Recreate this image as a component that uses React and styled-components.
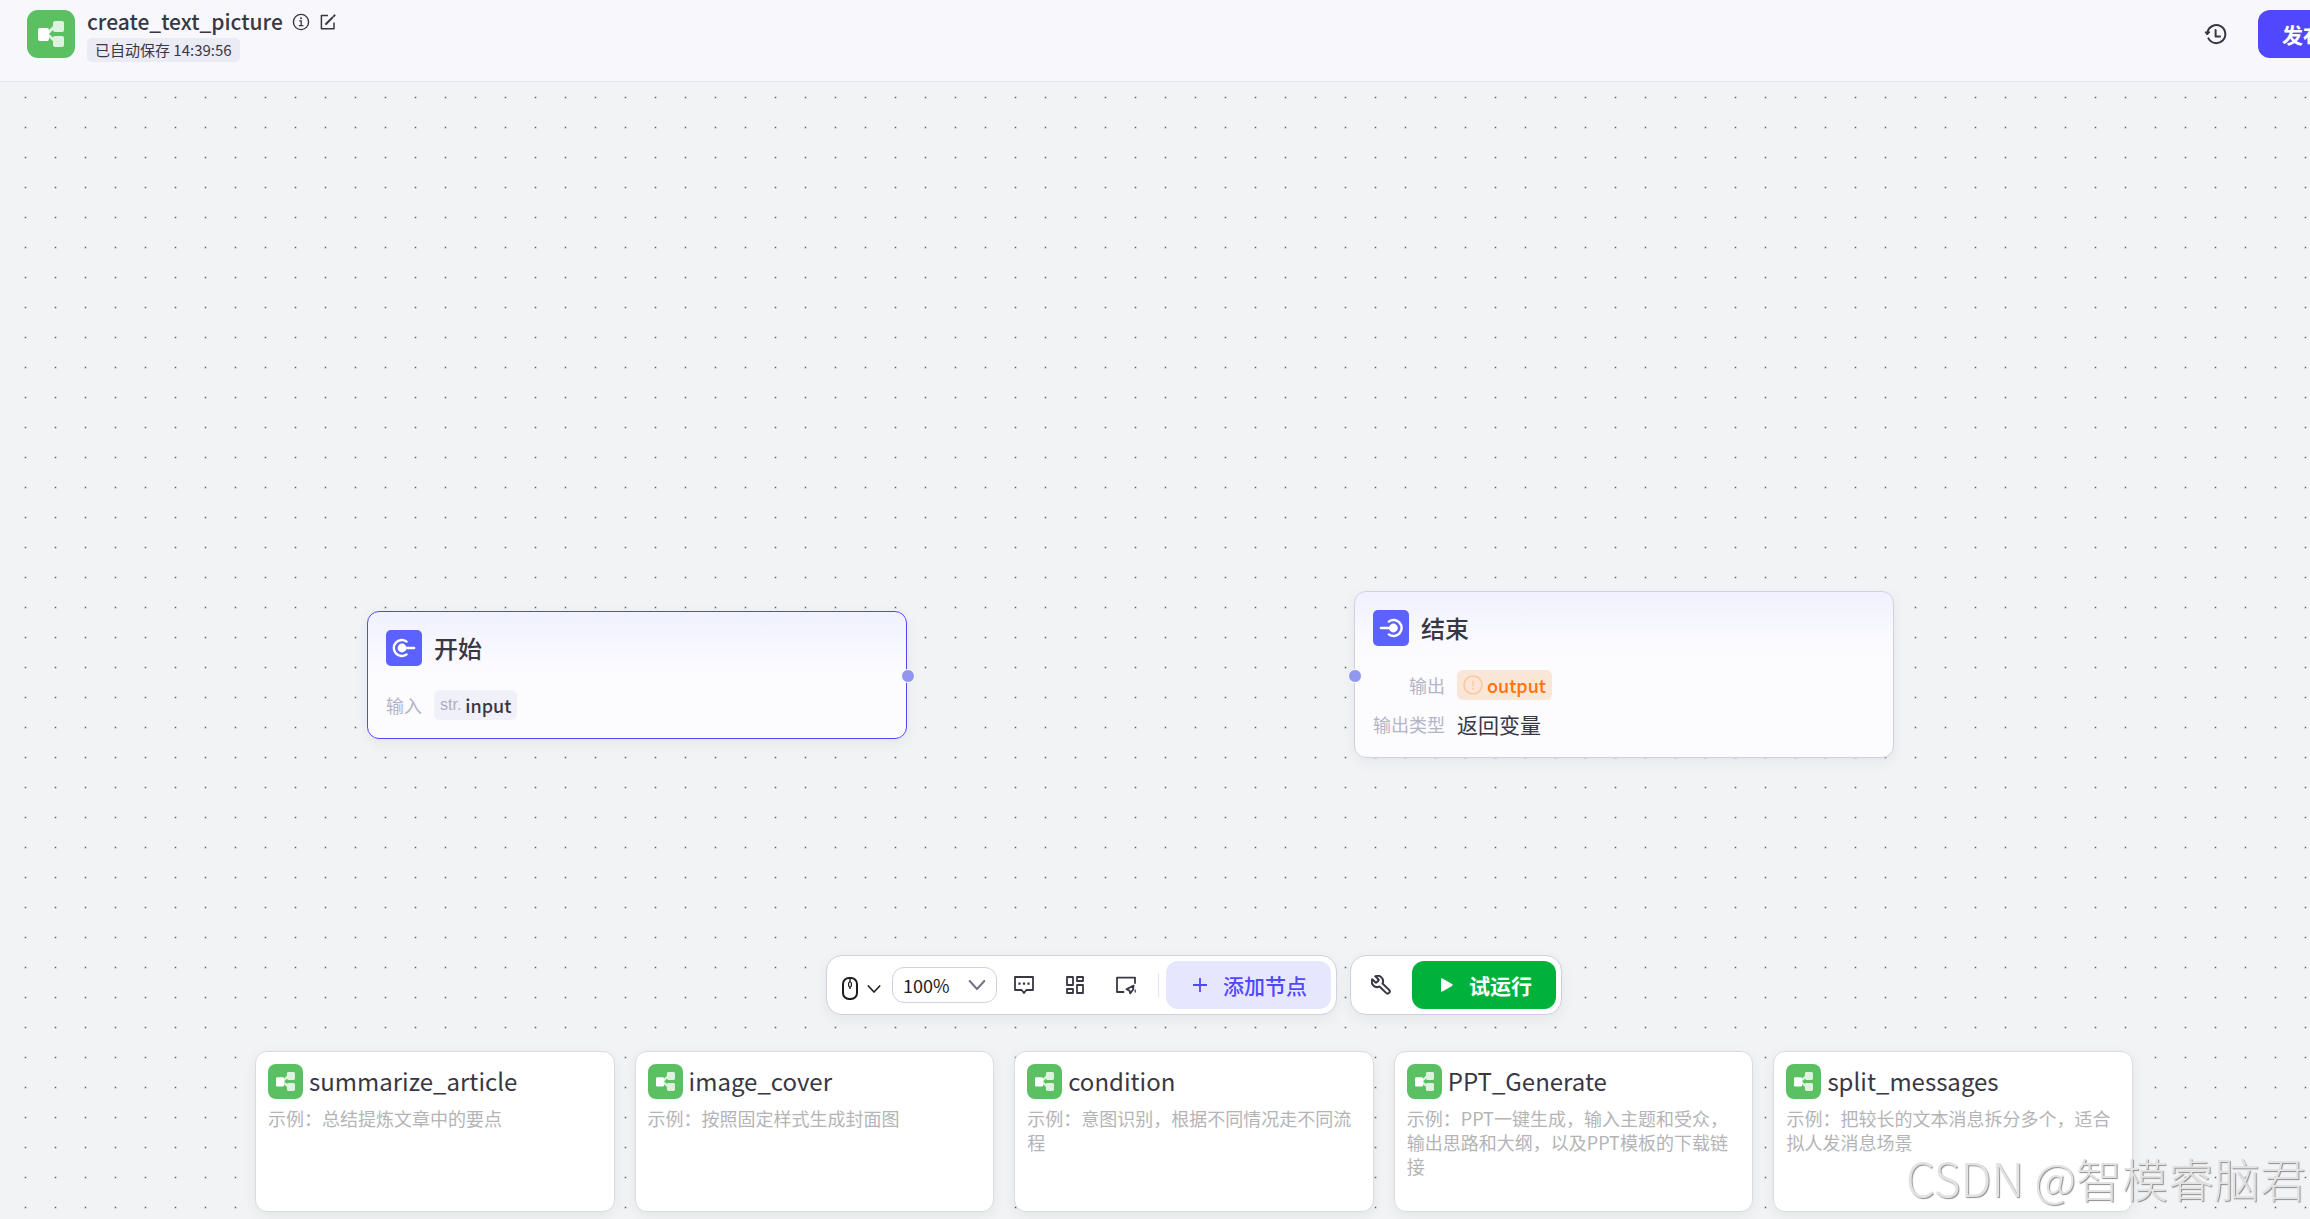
import React, { useState } from 'react';
import styled, { createGlobalStyle } from 'styled-components';

const EXAMPLES = [
  { name: 'summarize_article', text: '示例：总结提炼文章中的要点' },
  { name: 'image_cover', text: '示例：按照固定样式生成封面图' },
  { name: 'condition', text: '示例：意图识别，根据不同情况走不同流程' },
  {
    name: 'PPT_Generate',
    text: '示例：PPT一键生成，输入主题和受众，输出思路和大纲，以及PPT模板的下载链接',
  },
  {
    name: 'split_messages',
    text: '示例：把较长的文本消息拆分多个，适合拟人发消息场景',
  },
];

function WorkflowIcon() {
  return (
    <svg viewBox="0 0 48 48" aria-hidden="true">
      <path
        d="M20 24 L29 15 M20 24 L29 32"
        stroke="#def2df"
        strokeWidth="3"
        fill="none"
      />
      <rect x="26" y="11" width="11" height="11" rx="2" fill="#def2df" />
      <rect x="26" y="26" width="11" height="11" rx="2" fill="#def2df" />
      <rect x="11" y="18" width="11" height="13" rx="2" fill="#fff" />
    </svg>
  );
}

function StartIcon() {
  return (
    <svg viewBox="0 0 36 36" aria-hidden="true">
      <path
        d="M20.6 11.6A8 8 0 1 0 20.6 24.4"
        fill="none"
        stroke="#fff"
        strokeWidth="2.4"
        strokeLinecap="round"
      />
      <circle cx="16" cy="18" r="4.4" fill="#fff" />
      <path d="M16 18H28" stroke="#fff" strokeWidth="2.6" strokeLinecap="round" />
    </svg>
  );
}

function EndIcon() {
  return (
    <svg viewBox="0 0 36 36" aria-hidden="true">
      <path
        d="M15.8 11.6A8 8 0 1 1 15.8 24.4"
        fill="none"
        stroke="#fff"
        strokeWidth="2.4"
        strokeLinecap="round"
      />
      <circle cx="20.4" cy="18" r="4.4" fill="#fff" />
      <path d="M8 18H20" stroke="#fff" strokeWidth="2.6" strokeLinecap="round" />
    </svg>
  );
}

function InfoIcon() {
  return (
    <svg width="18" height="18" viewBox="0 0 18 18" fill="none" stroke="currentColor">
      <circle cx="9" cy="9" r="7.6" strokeWidth="1.4" />
      <path d="M7.2 7.8H9.2V12.6M6.8 12.6H11.4" strokeWidth="1.3" />
      <circle cx="9" cy="5.2" r="1" fill="currentColor" stroke="none" />
    </svg>
  );
}

function EditIcon() {
  return (
    <svg width="18" height="18" viewBox="0 0 18 18" fill="none" stroke="currentColor">
      <path d="M9 2.4H2.4V15.8H15V9.4" strokeWidth="1.5" strokeLinejoin="round" />
      <path d="M7 11 L13.6 4.4" strokeWidth="2" strokeLinecap="round" />
      <path d="M15 3 L15.6 2.4" strokeWidth="2" strokeLinecap="round" />
    </svg>
  );
}

function HistoryIcon() {
  return (
    <svg width="24" height="24" viewBox="0 0 24 24" fill="none" stroke="currentColor">
      <path
        d="M3.5 10.4A9 9 0 1 1 4.4 16.4"
        strokeWidth="2"
        strokeLinecap="round"
      />
      <path d="M1 10H6L3.2 13Z" fill="currentColor" strokeLinejoin="round" />
      <path
        d="M11.6 8V14.6H16"
        strokeWidth="2"
        strokeLinecap="round"
        strokeLinejoin="round"
      />
    </svg>
  );
}

function MouseIcon() {
  return (
    <svg width="16" height="24" viewBox="0 0 16 24" fill="none" stroke="currentColor">
      <rect x="1" y="1" width="14" height="21" rx="6" strokeWidth="2" />
      <path d="M8 1V5M8 10V12" strokeWidth="1.4" />
      <rect x="6.6" y="5" width="2.8" height="5" rx="1.4" strokeWidth="1.2" />
    </svg>
  );
}

function ChevronIcon({ size }) {
  return (
    <svg width={size} height={size} viewBox="0 0 16 16" fill="none" stroke="currentColor">
      <path
        d="M1.5 4.5 L8 11.5 L14.5 4.5"
        strokeWidth="1.8"
        strokeLinecap="round"
        strokeLinejoin="round"
      />
    </svg>
  );
}

function CommentIcon() {
  return (
    <svg width="20" height="20" viewBox="0 0 20 20" fill="none" stroke="currentColor">
      <path
        d="M1 2H19V15H12.4L10 18L7.6 15H1Z"
        strokeWidth="1.8"
        strokeLinejoin="round"
      />
      <path d="M4.4 8.6H6.6M8.9 8.6H11.1M13.4 8.6H15.6" strokeWidth="2.2" />
    </svg>
  );
}

function LayoutIcon() {
  return (
    <svg width="20" height="20" viewBox="0 0 20 20" fill="none" stroke="currentColor">
      <g strokeWidth="1.8" strokeLinejoin="round">
        <rect x="2" y="2" width="6" height="8" />
        <rect x="12" y="2" width="6" height="4" />
        <rect x="2" y="14" width="6" height="4" />
        <rect x="12" y="10" width="6" height="8" />
      </g>
    </svg>
  );
}

function MinimapIcon() {
  return (
    <svg width="20" height="20" viewBox="0 0 20 20" fill="none" stroke="currentColor">
      <path
        d="M7.6 17H1V2.6H19V8"
        strokeWidth="1.8"
        strokeLinejoin="round"
        strokeLinecap="round"
      />
      <path
        d="M10.4 14.2 L17.6 10.6 L17 14.8 L14.2 18.4 L13.4 15.6Z"
        strokeWidth="1.8"
        strokeLinejoin="round"
      />
      <path d="M19.2 14.4V17.6" strokeWidth="1.2" />
    </svg>
  );
}

function PlusIcon() {
  return (
    <svg width="14" height="14" viewBox="0 0 14 14" stroke="currentColor">
      <path d="M7 0V14M0 7H14" strokeWidth="1.8" />
    </svg>
  );
}

function WrenchIcon() {
  return (
    <svg width="20" height="20" viewBox="2 2 20 20" fill="none" stroke="currentColor">
      <path
        transform="matrix(-1 0 0 1 24 0)"
        d="M14.7 6.3a1 1 0 0 0 0 1.4l1.6 1.6a1 1 0 0 0 1.4 0l3-3a5.4 5.4 0 0 1-7.2 7.2l-6.6 6.4a2.1 2.1 0 0 1-3-3l6.6-6.4a5.4 5.4 0 0 1 7.2-7.2z"
        strokeWidth="2"
        strokeLinejoin="round"
      />
    </svg>
  );
}

function PlayIcon() {
  return (
    <svg width="12" height="14" viewBox="0 0 12 14" fill="currentColor">
      <path d="M1.4 0.4 L11.4 6.3Q12 7 11.4 7.7L1.4 13.6Q0 14 0 12.8V1.2Q0 0 1.4 0.4Z" />
    </svg>
  );
}

function WarnIcon() {
  return (
    <svg width="20" height="20" viewBox="0 0 20 20" fill="none" stroke="#fac89c">
      <circle cx="10" cy="10" r="9" strokeWidth="1.6" />
      <path d="M10 5.4V11.4M10 13V14.6" strokeWidth="1.4" />
    </svg>
  );
}

function App() {
  const [zoom, setZoom] = useState('100%');

  return (
    <Page>
      <GlobalStyle />
      <Header>
        <Logo>
          <WorkflowIcon />
        </Logo>
        <HeaderInfo>
          <TitleRow>
            <PageTitle>create_text_picture</PageTitle>
            <IconButton type="button" aria-label="详情">
              <InfoIcon />
            </IconButton>
            <IconButton type="button" aria-label="编辑">
              <EditIcon />
            </IconButton>
          </TitleRow>
          <SavedTag>已自动保存 14:39:56</SavedTag>
        </HeaderInfo>
        <HeaderActions>
          <IconButton type="button" aria-label="历史版本">
            <HistoryIcon />
          </IconButton>
          <PublishBtn type="button">发布</PublishBtn>
        </HeaderActions>
      </Header>

      <Canvas>
        <StartNode>
          <NodeHead>
            <NodeIcon>
              <StartIcon />
            </NodeIcon>
            <NodeTitle>开始</NodeTitle>
          </NodeHead>
          <NodeFields>
            <FieldLabel>输入</FieldLabel>
            <VarTag>
              <VarType>str.</VarType>
              input
            </VarTag>
          </NodeFields>
          <OutPort />
        </StartNode>

        <EndNode>
          <NodeHead>
            <NodeIcon>
              <EndIcon />
            </NodeIcon>
            <NodeTitle>结束</NodeTitle>
          </NodeHead>
          <NodeFields>
            <FieldLabel>输出</FieldLabel>
            <VarTag $warn>
              <WarnIcon />
              output
            </VarTag>
            <FieldLabel>输出类型</FieldLabel>
            <FieldValue>返回变量</FieldValue>
          </NodeFields>
          <InPort />
        </EndNode>

        <Toolbars>
          <Toolbar>
            <MouseBtn type="button" aria-label="交互模式">
              <MouseIcon />
              <ChevronIcon size={14} />
            </MouseBtn>
            <ZoomBox>
              <ZoomSelect
                aria-label="缩放"
                value={zoom}
                onChange={e => setZoom(e.target.value)}
              >
                <option>50%</option>
                <option>100%</option>
                <option>150%</option>
              </ZoomSelect>
              <ChevronIcon size={18} />
            </ZoomBox>
            <ToolGroup>
              <IconButton type="button" aria-label="注释">
                <CommentIcon />
              </IconButton>
              <IconButton type="button" aria-label="优化布局">
                <LayoutIcon />
              </IconButton>
              <IconButton type="button" aria-label="缩略图">
                <MinimapIcon />
              </IconButton>
            </ToolGroup>
            <Divider />
            <AddBtn type="button">
              <PlusIcon />
              添加节点
            </AddBtn>
          </Toolbar>
          <Toolbar>
            <DebugBtn type="button" aria-label="调试">
              <WrenchIcon />
            </DebugBtn>
            <RunBtn type="button">
              <PlayIcon />
              试运行
            </RunBtn>
          </Toolbar>
        </Toolbars>

        <CardList>
          {EXAMPLES.map(item => (
            <Card key={item.name}>
              <CardHead>
                <CardLogo>
                  <WorkflowIcon />
                </CardLogo>
                <CardTitle>{item.name}</CardTitle>
              </CardHead>
              <CardText>{item.text}</CardText>
            </Card>
          ))}
        </CardList>
      </Canvas>
      <Watermark>CSDN @智模睿脑君</Watermark>
    </Page>
  );
}

export default App;

const GlobalStyle = createGlobalStyle`
  * {
    box-sizing: border-box;
  }

  body {
    margin: 0;
    overflow: hidden;
    font-family: 'Noto Sans CJK SC', sans-serif;
    color: #383743;
  }

  button,
  select {
    font-family: inherit;
  }

  h1, h2, h3, p {
    margin: 0;
  }

  svg {
    display: block;
    flex-shrink: 0;
  }
`;

// the workspace runs on past the right side of the window
const Page = styled.div`
  display: flex;
  flex-direction: column;
  width: calc(100% + 78px);
  height: 100vh;
`;

const Header = styled.header`
  display: flex;
  align-items: flex-start;
  padding: 10px 40px 10px 27px;
  height: 82px;
  background-color: #f7f7fc;
  border-bottom: 1px solid #e2e3ee;
`;

const Logo = styled.div`
  width: 48px;
  height: 48px;
  border-radius: 11px;
  background-color: #5bc062;
`;

const HeaderInfo = styled.div`
  margin-left: 12px;
`;

const TitleRow = styled.div`
  display: flex;
  align-items: center;
  gap: 9px;
  height: 24px;
`;

const PageTitle = styled.h1`
  align-self: flex-start;
  font-size: 21px;
  font-weight: 500;
  line-height: 22px;
`;

const IconButton = styled.button`
  display: flex;
  padding: 0;
  border: none;
  background: none;
  color: #383743;
  cursor: pointer;
`;

const SavedTag = styled.div`
  display: inline-block;
  margin-top: 4px;
  padding: 0 8px;
  border-radius: 5px;
  background-color: #eaebf5;
  font-size: 15px;
  line-height: 24px;
`;

const HeaderActions = styled.div`
  display: flex;
  align-items: center;
  gap: 30px;
  margin-left: auto;
`;

const PublishBtn = styled.button`
  height: 48px;
  padding: 0 24px;
  border: none;
  border-radius: 12px;
  background-color: #5147ff;
  color: white;
  font-size: 21px;
  font-weight: bold;
  cursor: pointer;
`;

const Canvas = styled.main`
  position: relative;
  display: flex;
  flex: 1;
  flex-direction: column;
  justify-content: flex-end;
  padding: 0 255px 7px;
  background-color: #f2f3f5;
  background-image: radial-gradient(
    circle at 55% 55%,
    #5a5b62 0,
    rgba(90, 91, 98, 0.2) 1px,
    transparent 2px
  );
  background-size: 30px 30px;
  background-position: 9px -1px;
`;

const Node = styled.section`
  position: absolute;
  width: 540px;
  padding: 18px;
  border: 1px solid #cfd0e2;
  border-radius: 12px;
  background: linear-gradient(#f1f1ff 0, #fcfcff 64px);
  box-shadow: 0 4px 14px rgba(0, 0, 0, 0.06);
`;

const StartNode = styled(Node)`
  top: 529px;
  left: 367px;
  border-color: #5147ff;
`;

const EndNode = styled(Node)`
  top: 509px;
  left: 1354px;
`;

const NodeHead = styled.div`
  display: flex;
  align-items: center;
  gap: 12px;
  height: 36px;
`;

const NodeIcon = styled.div`
  width: 36px;
  height: 36px;
  border-radius: 5px;
  background-color: #5c62ff;
`;

const NodeTitle = styled.h2`
  font-size: 24px;
  font-weight: 500;
  line-height: 36px;
`;

const NodeFields = styled.div`
  display: grid;
  grid-template-columns: auto 1fr;
  align-items: center;
  gap: 9px 12px;
  margin-top: 24px;
`;

const FieldLabel = styled.span`
  color: #b3b4c8;
  font-size: 18px;
  line-height: 30px;
  text-align: right;
`;

const VarTag = styled.span`
  display: flex;
  align-items: center;
  gap: 4px;
  justify-self: start;
  height: 30px;
  padding: 0 6px;
  border-radius: 6px;
  background-color: ${props => (props.$warn ? '#fae6d6' : '#f0f0f8')};
  color: ${props => (props.$warn ? '#ff7300' : '#383743')};
  font-size: 18px;
  font-weight: 500;
`;

const VarType = styled.span`
  color: #abacc6;
  font-family: 'Liberation Sans', sans-serif;
  font-size: 16px;
  font-weight: normal;
`;

const FieldValue = styled.span`
  font-size: 21px;
  line-height: 30px;
`;

const Port = styled.span`
  position: absolute;
  top: 50%;
  width: 14px;
  height: 14px;
  margin-top: -6px;
  border: 1px solid white;
  border-radius: 50%;
  background-color: #9197f1;
`;

const OutPort = styled(Port)`
  right: -9px;
`;

const InPort = styled(Port)`
  left: -7px;
`;

const Toolbars = styled.div`
  display: flex;
  justify-content: center;
  gap: 13px;
  margin-bottom: 36px;
`;

const Toolbar = styled.div`
  display: flex;
  align-items: center;
  height: 60px;
  padding: 5px;
  border: 1px solid #cfd0e2;
  border-radius: 16px;
  background-color: white;
  box-shadow: 0 4px 14px rgba(0, 0, 0, 0.06);
`;

const MouseBtn = styled(IconButton)`
  align-items: center;
  gap: 9px;
  margin: 0 11px 0 10px;
  padding-top: 7px;
  color: #1d1c23;
`;

const ZoomBox = styled.div`
  display: grid;
  align-items: center;
  width: 105px;
  height: 36px;
  border: 1px solid #cfd0e2;
  border-radius: 12px;
  color: #70728a;

  > * {
    grid-area: 1 / 1;
  }

  svg {
    justify-self: end;
    margin-right: 10px;
    pointer-events: none;
  }
`;

const ZoomSelect = styled.select`
  width: 100%;
  height: 34px;
  padding: 0 10px;
  border: none;
  background: none;
  color: #1d1c23;
  font-size: 18px;
  appearance: none;
`;

const ToolGroup = styled.div`
  display: flex;
  align-items: center;
  gap: 31px;
  margin: 0 22px 0 17px;
`;

const Divider = styled.span`
  width: 1px;
  height: 24px;
  margin-right: 7px;
  background-color: #e6e7f0;
`;

const ActionBtn = styled.button`
  display: flex;
  align-items: center;
  gap: 16px;
  height: 48px;
  border: none;
  border-radius: 12px;
  font-size: 21px;
  cursor: pointer;
`;

const AddBtn = styled(ActionBtn)`
  padding: 0 24px 0 27px;
  background-color: #e6e7ff;
  color: #5147ff;
  font-weight: 500;
`;

const DebugBtn = styled(IconButton)`
  margin: 0 21px 0 15px;
`;

const RunBtn = styled(ActionBtn)`
  padding: 0 24px 0 29px;
  background-color: #00b23c;
  color: white;
  font-weight: bold;
`;

const CardList = styled.div`
  display: grid;
  grid-template-columns: repeat(5, 1fr);
  gap: 20px;
`;

const Card = styled.article`
  min-height: 161px;
  padding: 12px;
  border: 1px solid #dadbde;
  border-radius: 12px;
  background-color: white;
  box-shadow: 0 4px 14px rgba(0, 0, 0, 0.06);
`;

const CardHead = styled.div`
  display: flex;
  gap: 6px;
  height: 36px;
`;

const CardLogo = styled(Logo)`
  width: 35px;
  height: 35px;
  border-radius: 8px;
`;

const CardTitle = styled.h3`
  font-size: 24px;
  font-weight: normal;
  line-height: 34px;
`;

const CardText = styled.p`
  margin-top: 6px;
  color: #b4b4b6;
  font-size: 18px;
  line-height: 24px;
`;

const Watermark = styled.div`
  position: fixed;
  right: 4px;
  bottom: 12px;
  color: #e2e2e2;
  font-size: 46px;
  font-weight: 300;
  line-height: 60px;
  text-shadow: 1px 1px 1px #8f8f8f;
  pointer-events: none;
`;
